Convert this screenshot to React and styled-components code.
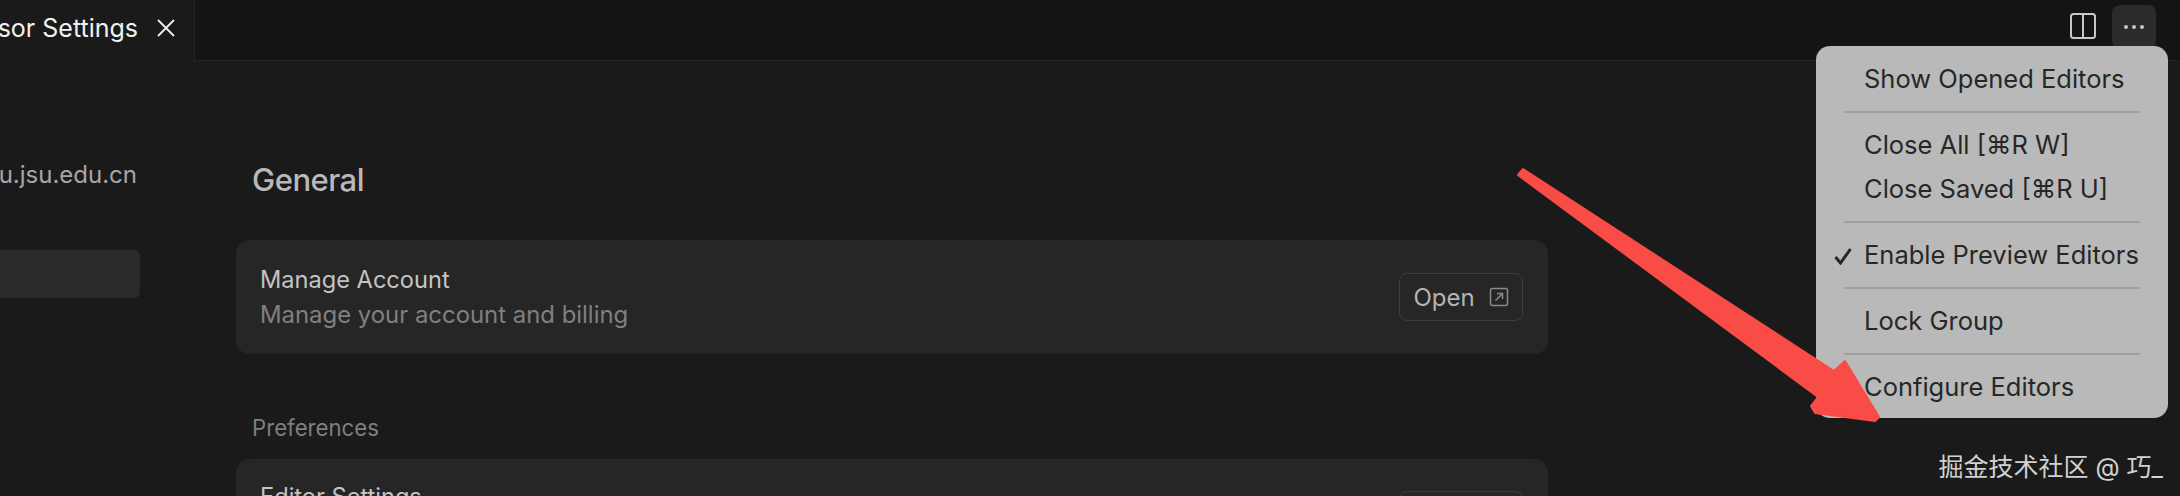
import styled, { createGlobalStyle } from "styled-components"

const GlobalStyle = createGlobalStyle`
  html, body {
    margin: 0;
    padding: 0;
    width: 2180px;
    height: 496px;
    overflow: hidden;
    background: #1a1a1a;
  }
`

const Page = styled.div`
  position: relative;
  width: 2180px;
  height: 496px;
  overflow: hidden;
  background: #1a1a1a;
  font-family: Inter, "Noto Sans CJK SC", sans-serif;
  display: flex;
  flex-direction: column;
`

const TabBar = styled.div`
  height: 60px;
  flex: none;
  display: flex;
  align-items: stretch;
  background: #141414;
  border-bottom: 1px solid #242424;
`

const Tab = styled.div`
  width: 195px;
  flex: none;
  display: flex;
  align-items: center;
  justify-content: flex-end;
  gap: 19px;
  padding: 0 19px 5px 0;
  box-sizing: border-box;
  margin-bottom: -1px;
  overflow: hidden;
  background: #1a1a1a;
  border-right: 1px solid #262626;
  color: #f1f1f1;
  font-size: 25px;
  white-space: nowrap;

  > * {
    flex: none;
  }
`

const TabActions = styled.div`
  flex: 1;
  display: flex;
  justify-content: flex-end;
  align-items: center;
  gap: 15px;
  padding: 0 24px 6px 0;
`

const ActionButton = styled.div`
  width: 44px;
  height: 44px;
  display: flex;
  align-items: center;
  justify-content: center;
  border-radius: 8px;
  background: ${(p) => (p.$active ? "#2b2b2b" : "transparent")};
`

const SplitSvg = styled.svg`
  margin-bottom: 2px;
`

const Body = styled.div`
  flex: 1;
  display: flex;
  min-height: 0;
`

const Sidebar = styled.aside`
  width: 140px;
  flex: none;
  padding-top: 99px;
  display: flex;
  flex-direction: column;
  align-items: flex-end;
`

const Email = styled.div`
  height: 30px;
  line-height: 30px;
  font-size: 24px;
  color: #a6a6a6;
  white-space: nowrap;
  margin-right: 3px;
`

const NavItem = styled.div`
  width: 160px;
  height: 48px;
  margin-top: 60px;
  border-radius: 6px;
  background: #2a2a2a;
`

const Content = styled.main`
  width: 1312px;
  margin-left: 96px;
  padding-top: 99px;
  flex: none;
`

const Heading = styled.h2`
  margin: 0 0 0 16px;
  height: 80px;
  font-size: 31px;
  font-weight: 500;
  line-height: 40px;
  letter-spacing: -0.5px;
  color: #b9b9b9;
`

const Card = styled.section`
  display: flex;
  justify-content: space-between;
  align-items: center;
  height: 114px;
  padding: 0 25px 0 24px;
  box-sizing: border-box;
  border-radius: 14px;
  background: #262626;
`

const CardText = styled.div`
  display: flex;
  flex-direction: column;
  gap: 8px;
`

const CardTitle = styled.div`
  font-size: 23.6px;
  line-height: 27px;
  color: #c4c4c4;
`

const CardSub = styled.div`
  font-size: 23.9px;
  line-height: 27px;
  color: #808080;
`

const OpenButton = styled.div`
  width: 124px;
  height: 48px;
  box-sizing: border-box;
  border: 1.5px solid #3d3d3d;
  border-radius: 8px;
  display: flex;
  align-items: center;
  justify-content: center;
  gap: 14px;
  color: #b4b4b4;
  font-size: 24px;
`

const LowerOpenButton = styled(OpenButton)`
  margin-top: 8px;
`

const SectionLabel = styled.div`
  margin: 60px 0 0 16px;
  height: 45px;
  line-height: 28px;
  font-size: 22.2px;
  color: #7f7f7f;
`

const LowerCard = styled(Card)`
  align-items: flex-start;
  padding-top: 24px;
`

const Menu = styled.div`
  position: absolute;
  left: 1816px;
  top: 46px;
  width: 352px;
  height: 372px;
  border-radius: 14px;
  background: #b9b9b9;
  padding: 11px 28px;
  box-sizing: border-box;
  color: #272727;
  font-size: 25.5px;
`

const MenuItem = styled.div`
  position: relative;
  height: 44px;
  line-height: 44px;
  padding-left: 20px;
  white-space: nowrap;
`

const MenuDivider = styled.div`
  height: 2px;
  margin: 10px 0;
  background: #a0a0a0;
`

const Check = styled.svg`
  position: absolute;
  left: -10px;
  top: 14px;
`

const Arrow = styled.svg`
  position: absolute;
  left: 0;
  top: 0;
`

const Watermark = styled.div`
  position: absolute;
  right: 17px;
  bottom: 13px;
  color: #d2d2d2;
  font-size: 25px;
  line-height: 32px;
  white-space: nowrap;
`

const CloseIcon = () => (
  <svg width="18" height="18" viewBox="0 0 18 18" fill="none" stroke="#eeeeee" strokeWidth="1.8">
    <path d="M1 1l16 16M17 1L1 17" />
  </svg>
)

const SplitIcon = () => (
  <SplitSvg width="28" height="28" viewBox="0 0 28 28" fill="none" stroke="#c8c8c8" strokeWidth="2">
    <rect x="2" y="2" width="24" height="24" rx="2.5" />
    <path d="M14 2v24" />
  </SplitSvg>
)

const DotsIcon = () => (
  <svg width="22" height="6" viewBox="0 0 22 6" fill="#c6c6c6">
    <circle cx="3" cy="3" r="2" />
    <circle cx="11" cy="3" r="2" />
    <circle cx="19" cy="3" r="2" />
  </svg>
)

const ExternalIcon = () => (
  <svg width="20" height="20" viewBox="0 0 20 20" fill="none" stroke="#8a8a8a" strokeWidth="1.5">
    <rect x="1.5" y="1.5" width="17" height="17" rx="2" />
    <path d="M6.5 13.5l7-7M8 6.5h5.5V12" />
  </svg>
)

const App = () => (
  <Page>
    <GlobalStyle />
    <TabBar>
      <Tab>
        <span>sor Settings</span>
        <CloseIcon />
      </Tab>
      <TabActions>
        <SplitIcon />
        <ActionButton $active>
          <DotsIcon />
        </ActionButton>
      </TabActions>
    </TabBar>
    <Body>
      <Sidebar>
        <Email>u.jsu.edu.cn</Email>
        <NavItem />
      </Sidebar>
      <Content>
        <Heading>General</Heading>
        <Card>
          <CardText>
            <CardTitle>Manage Account</CardTitle>
            <CardSub>Manage your account and billing</CardSub>
          </CardText>
          <OpenButton>
            Open
            <ExternalIcon />
          </OpenButton>
        </Card>
        <SectionLabel>Preferences</SectionLabel>
        <LowerCard>
          <CardTitle>Editor Settings</CardTitle>
          <LowerOpenButton>
            Open
            <ExternalIcon />
          </LowerOpenButton>
        </LowerCard>
      </Content>
    </Body>
    <Menu>
      <MenuItem>Show Opened Editors</MenuItem>
      <MenuDivider />
      <MenuItem>Close All [⌘R W]</MenuItem>
      <MenuItem>Close Saved [⌘R U]</MenuItem>
      <MenuDivider />
      <MenuItem>
        <Check width="18" height="18" viewBox="0 0 18 18" fill="none" stroke="#272727" strokeWidth="3">
          <path d="M1.5 10l5 6L16.5 2" />
        </Check>
        Enable Preview Editors
      </MenuItem>
      <MenuDivider />
      <MenuItem>Lock Group</MenuItem>
      <MenuDivider />
      <MenuItem>Configure Editors</MenuItem>
    </Menu>
    <Arrow width="2180" height="496" viewBox="0 0 2180 496">
      <path
        d="M1523 169L1834 371L1845 361L1879 417L1875 421L1815 413L1811 406L1818 397L1518 175Z"
        fill="#f94c46"
        stroke="#f94c46"
        strokeWidth="2"
        strokeLinejoin="round"
      />
    </Arrow>
    <Watermark>掘金技术社区 @ 巧_</Watermark>
  </Page>
)

export default App
